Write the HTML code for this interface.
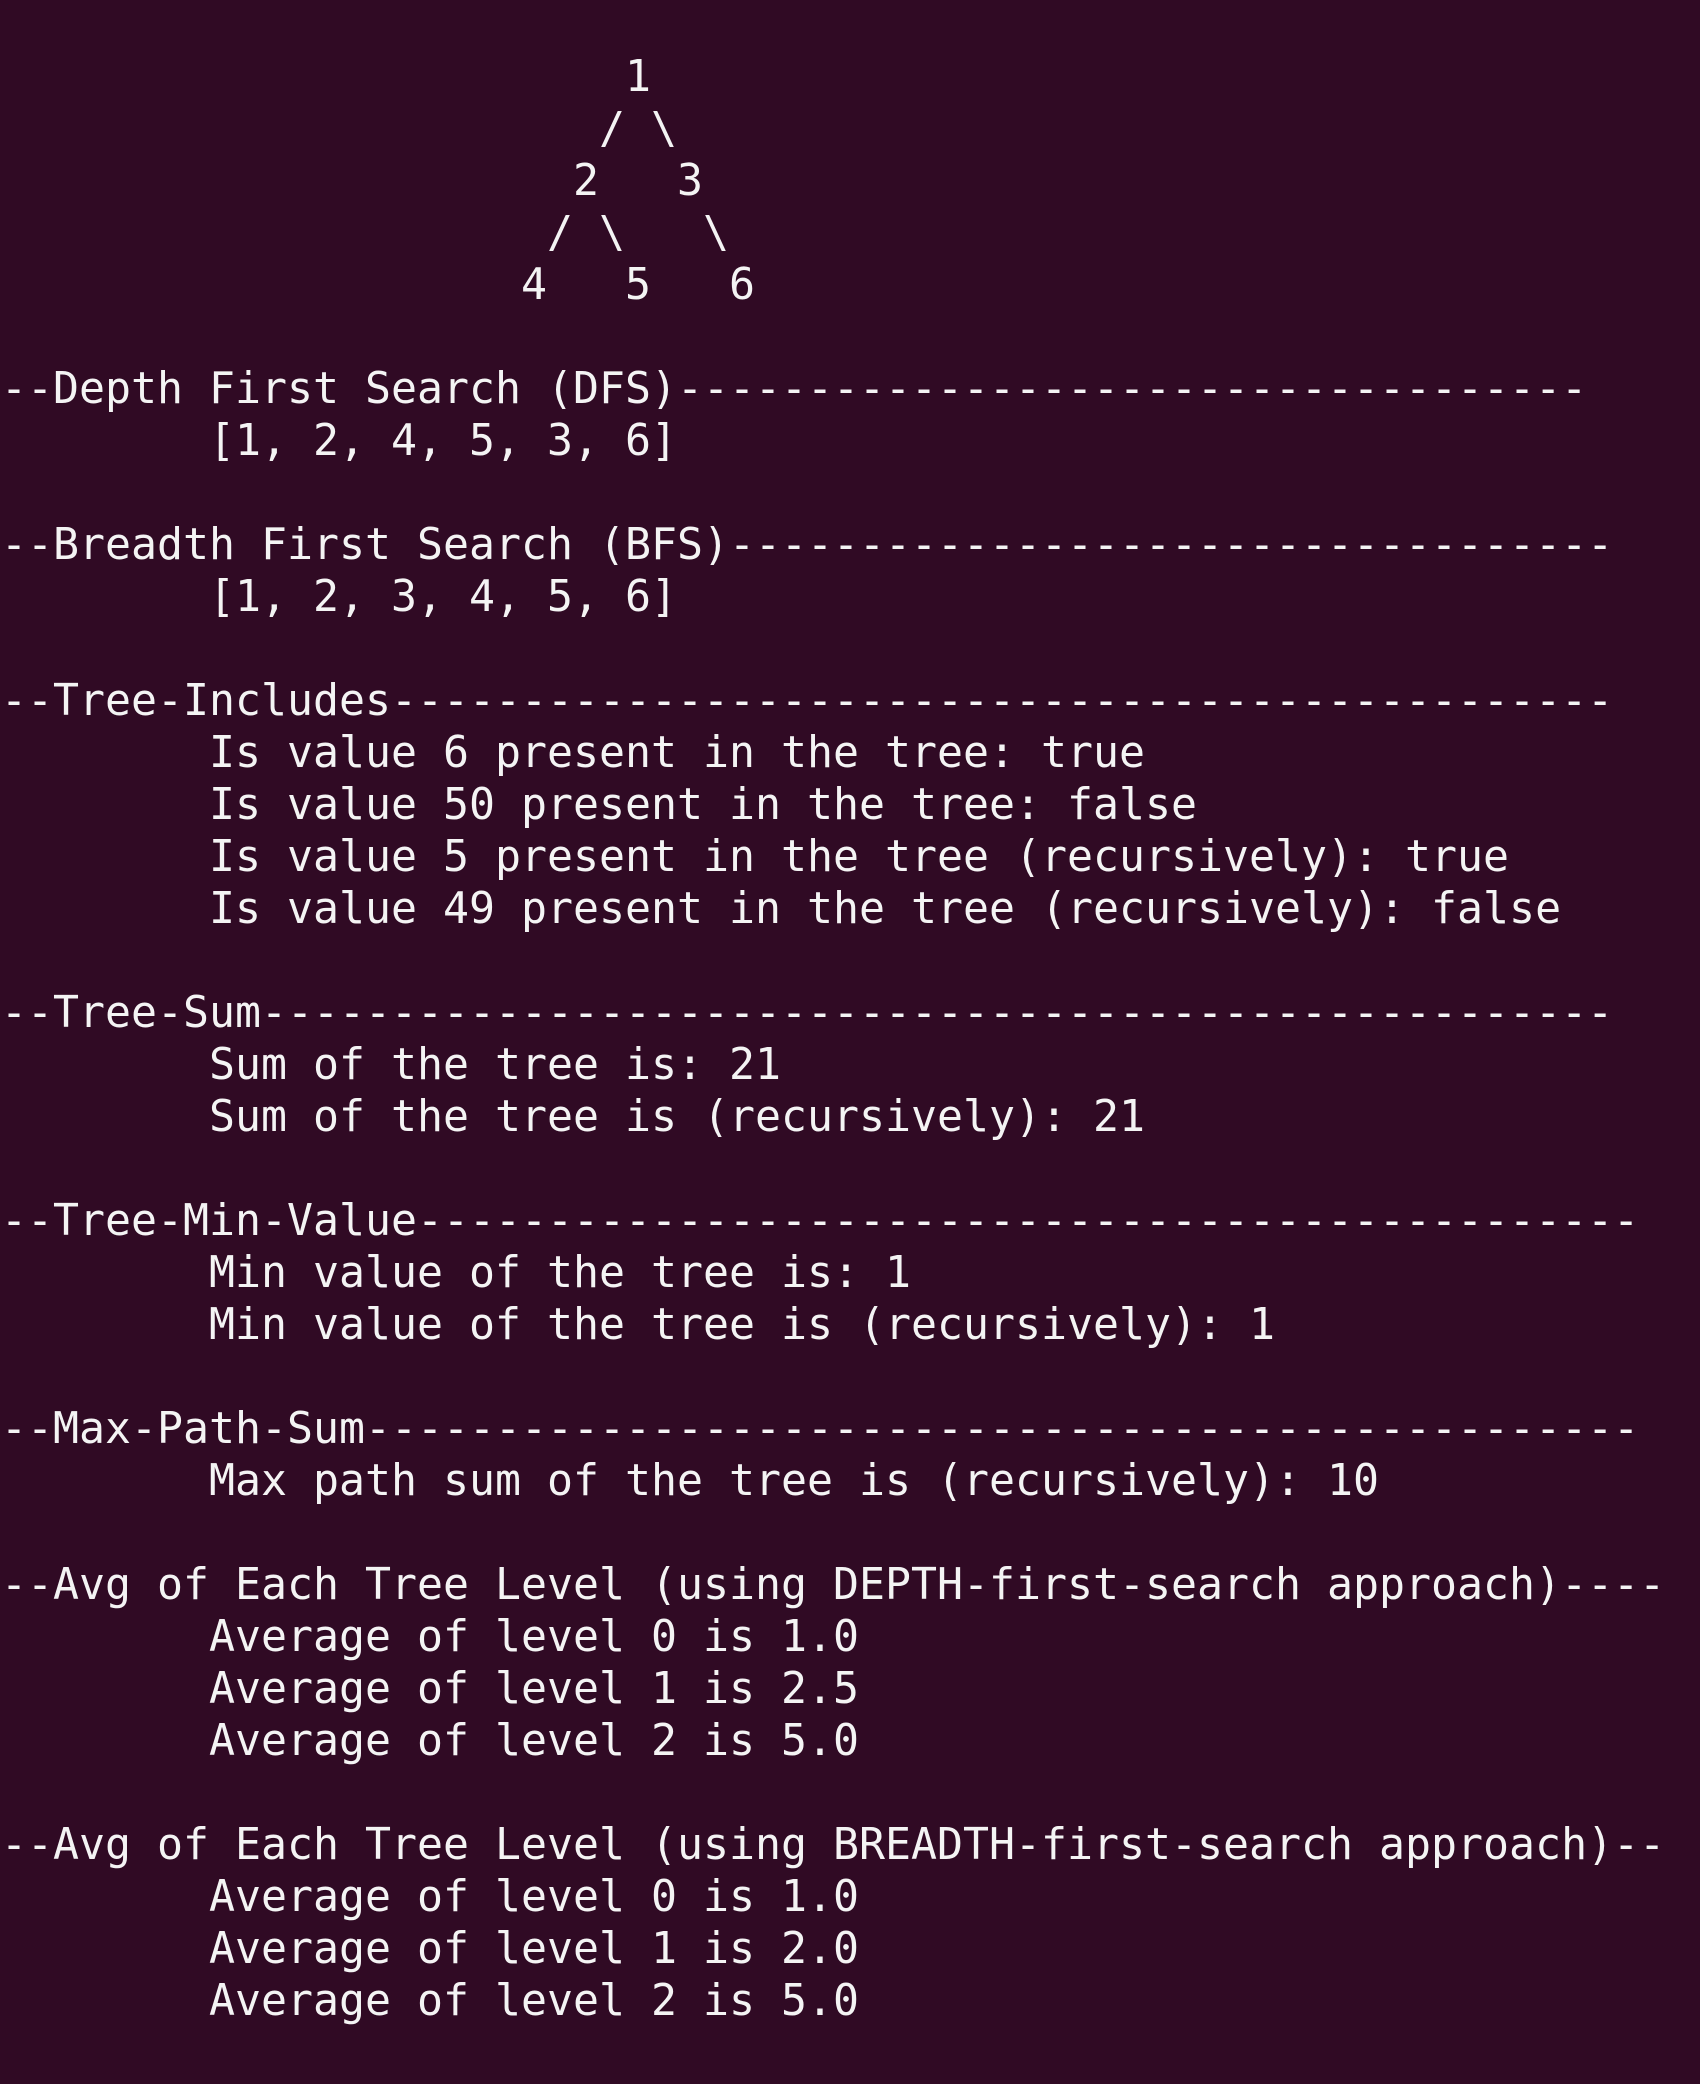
<!DOCTYPE html>
<html><head><meta charset="utf-8"><style>
html,body{margin:0;padding:0;background:#300a24;width:1700px;height:2084px;overflow:hidden}
pre{margin:0;padding:51px 0 0 1px;font-family:"DejaVu Sans Mono","Liberation Mono",monospace;font-size:43.2px;line-height:52px;color:#f4f4f4;white-space:pre}
</style></head><body><pre>                        1
                       / \
                      2   3
                     / \   \
                    4   5   6

--Depth First Search (DFS)-----------------------------------
        [1, 2, 4, 5, 3, 6]

--Breadth First Search (BFS)----------------------------------
        [1, 2, 3, 4, 5, 6]

--Tree-Includes-----------------------------------------------
        Is value 6 present in the tree: true
        Is value 50 present in the tree: false
        Is value 5 present in the tree (recursively): true
        Is value 49 present in the tree (recursively): false

--Tree-Sum----------------------------------------------------
        Sum of the tree is: 21
        Sum of the tree is (recursively): 21

--Tree-Min-Value-----------------------------------------------
        Min value of the tree is: 1
        Min value of the tree is (recursively): 1

--Max-Path-Sum-------------------------------------------------
        Max path sum of the tree is (recursively): 10

--Avg of Each Tree Level (using DEPTH-first-search approach)----
        Average of level 0 is 1.0
        Average of level 1 is 2.5
        Average of level 2 is 5.0

--Avg of Each Tree Level (using BREADTH-first-search approach)--
        Average of level 0 is 1.0
        Average of level 1 is 2.0
        Average of level 2 is 5.0
</pre></body></html>
